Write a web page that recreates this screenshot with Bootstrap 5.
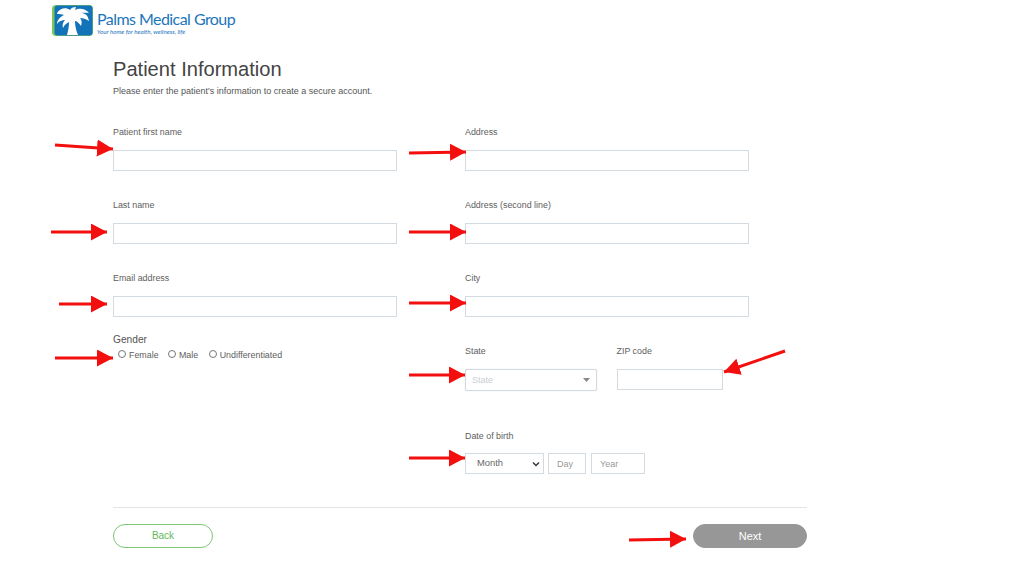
<!DOCTYPE html>
<html lang="en">
<head>
<meta charset="utf-8">
<title>Patient Information</title>
<link rel="stylesheet" href="https://cdn.jsdelivr.net/npm/bootstrap@5.3.0/dist/css/bootstrap.min.css">
<style>
html,body{height:572px;overflow:hidden;background:#fff}
body{font-family:"Liberation Sans",Arial,sans-serif;color:#555;position:relative}
.brand-bar{height:50px;padding:5px 0 0 52px}
.brand-copy{margin-left:4px}
.brand-name{font-family:"Lato",sans-serif;font-size:16px;line-height:18px;color:#1b75bb;letter-spacing:-.55px;margin-top:5px}
.brand-tag{font-family:"Lato",sans-serif;font-style:italic;font-size:6.2px;line-height:7px;color:#1b75bb;white-space:nowrap}
.sheet{width:694px;margin-left:113px}
.sheet h1{font-family:"Liberation Sans",sans-serif;font-size:20.1px;line-height:23px;font-weight:400;color:#444;margin:8px 0 5px}
.intro{font-size:9px;line-height:11px;color:#555;margin-bottom:30px}
.col-form{width:283.5px}
.gutter{width:68.5px;flex:none}
.fld{height:73px}
.fld label{display:block;font-size:8.9px;line-height:11px;color:#606060;margin-bottom:12px}
.lbl{font-size:8.9px;line-height:11px;color:#606060;margin-bottom:11px}
.box{display:block;width:100%;height:21px;border:1px solid #d3dae0;border-radius:0;background:#fff;padding:0 7px;font-size:9px;color:#777;box-shadow:none}
.gender-lbl{font-size:10.2px;line-height:12px;color:#555;margin-top:-12px}
.gender-row{font-size:8.9px;line-height:11px;color:#606060;margin-top:4px}
.gender-row .form-check-input{width:8px;height:8px;margin:-4px 3px 0 0;border:1px solid #777;float:none;background:#fff;flex:none}
.gender-row .form-check-input:first-child{margin-left:5px}
.gender-row label{margin-right:10.5px}
.gender-row label:first-of-type{margin-right:9.3px}
.state-block{height:85px}
.state-sel{width:132px;height:22px;border:1px solid #d3dae0;border-radius:2px;padding:1px 7px 0 6px;font-size:9px;color:#c9ced3;box-shadow:0 0 1px #ccc;background-size:7px 4px;background-position:right 6px center;background-image:url("data:image/svg+xml,%3csvg xmlns='http://www.w3.org/2000/svg' viewBox='0 0 7 4'%3e%3cpath fill='%23888' d='M0 0h7L3.5 4z'/%3e%3c/svg%3e")}
.zip-wrap{width:106.5px;margin-left:19.5px}
.st-wrap{width:132px}
.mon-sel{width:79px;height:21px;border:1px solid #d3dae0;border-radius:0;padding:0 0 0 11px;font-size:9.4px;color:#666;background-size:8px 8px;background-position:right 3px center;background-image:url("data:image/svg+xml,%3csvg xmlns='http://www.w3.org/2000/svg' viewBox='0 0 16 16'%3e%3cpath fill='none' stroke='%23343a40' stroke-width='3' d='M2 5l6 6 6-6'/%3e%3c/svg%3e")}
.day-in{width:38px;margin-left:4px;padding:0 8px}
.yr-in{width:54px;margin-left:5px;padding:0 8px}
.box::placeholder{color:#999;opacity:1}
.rule{height:1px;background:#e4e4e4;margin-top:33px}
.act{height:23.5px;border-radius:12px;font-size:10px;line-height:1;padding:1px 0 0}
.act-back{width:100px;border:1px solid #7cc576;color:#5fb85a;background:#fff}
.act-next{width:114px;border:1px solid #999;color:#fff;background:#979797;font-size:11px}
.foot-row{margin-top:16px}
.ptr{position:absolute;left:0;top:0;pointer-events:none}
</style>
</head>
<body>
<div class="brand-bar d-flex align-items-start">
  <svg width="41" height="31" viewBox="0 0 41 31" aria-label="Palms logo">
    <rect x="0" y="0" width="41" height="31" rx="4" fill="#7cc857"/>
    <rect x="2.5" y="0.5" width="38" height="30" rx="3" fill="#1273b9"/>
    <path fill="#fff" d="M5 8C8 3 14 2 18 5c1-2 3-3 6-3l-1 3c4-2 10-2 14 3-3-.5-6-.5-8 0 4 0 7 2 8 8-3-2-6-3-9-3 2 2 2 5 1 8-2-3-4-5-6-5 0 5 1 9 3 14H15c1-4 2-8 2-13-2 1-5 3-6 6-1-3 0-6 2-8-3 0-6 1-8 4 0-4 3-7 7-9-2-1-4-1-7-1z"/>
  </svg>
  <div class="brand-copy">
    <div class="brand-name">Palms Medical Group</div>
    <div class="brand-tag">Your home for health, wellness, life</div>
  </div>
</div>
<main class="sheet">
  <h1>Patient Information</h1>
  <p class="intro">Please enter the patient's information to create a secure account.</p>
  <form>
    <div class="d-flex">
      <div class="col-form">
        <div class="fld"><label>Patient first name</label><input class="box" type="text"></div>
        <div class="fld"><label>Last name</label><input class="box" type="text"></div>
        <div class="fld"><label>Email address</label><input class="box" type="text"></div>
        <div class="gender-lbl">Gender</div>
        <div class="gender-row d-flex align-items-center">
          <input class="form-check-input" type="radio" name="g"><label>Female</label>
          <input class="form-check-input" type="radio" name="g"><label>Male</label>
          <input class="form-check-input" type="radio" name="g"><label>Undifferentiated</label>
        </div>
      </div>
      <div class="gutter"></div>
      <div class="col-form">
        <div class="fld"><label>Address</label><input class="box" type="text"></div>
        <div class="fld"><label>Address (second line)</label><input class="box" type="text"></div>
        <div class="fld"><label>City</label><input class="box" type="text"></div>
        <div class="d-flex fld state-block">
          <div class="st-wrap"><label>State</label><select class="form-select state-sel"><option>State</option></select></div>
          <div class="zip-wrap"><label>ZIP code</label><input class="box" type="text"></div>
        </div>
        <div class="lbl">Date of birth</div>
        <div class="d-flex dob-row">
          <select class="form-select mon-sel"><option>Month</option></select>
          <input class="box day-in" type="text" placeholder="Day">
          <input class="box yr-in" type="text" placeholder="Year">
        </div>
      </div>
    </div>
    <div class="rule"></div>
    <div class="d-flex justify-content-between foot-row">
      <button type="button" class="btn act act-back">Back</button>
      <button type="button" class="btn act act-next">Next</button>
    </div>
  </form>
</main>
<svg class="ptr" width="1024" height="572" viewBox="0 0 1024 572">
  <defs><marker id="ah" markerUnits="userSpaceOnUse" markerWidth="18" markerHeight="18" refX="16" refY="8.5" orient="auto"><path d="M0 0L16 8.5 0 17z" fill="#f40f0f"/></marker></defs>
  <g stroke="#f40f0f" stroke-width="3" fill="none">
    <path d="M55 145L113 149" marker-end="url(#ah)"/>
    <path d="M409 153L466 152" marker-end="url(#ah)"/>
    <path d="M51 232L107 232" marker-end="url(#ah)"/>
    <path d="M409 232L466 232" marker-end="url(#ah)"/>
    <path d="M59 304L107 304" marker-end="url(#ah)"/>
    <path d="M409 303L466 303" marker-end="url(#ah)"/>
    <path d="M55 358L113 358" marker-end="url(#ah)"/>
    <path d="M409 375L465 375" marker-end="url(#ah)"/>
    <path d="M785 351L724 372" marker-end="url(#ah)"/>
    <path d="M409 458L465 458" marker-end="url(#ah)"/>
    <path d="M629 540L686 539" marker-end="url(#ah)"/>
  </g>
</svg>
<script src="https://cdn.jsdelivr.net/npm/bootstrap@5.3.0/dist/js/bootstrap.bundle.min.js"></script>
</body>
</html>
